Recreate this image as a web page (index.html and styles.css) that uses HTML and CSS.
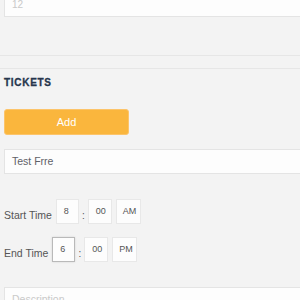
FILE: index.html
```html
<!DOCTYPE html>
<html lang="en">
<head>
    <meta charset="UTF-8">
    <title>Tickets</title>
    <link rel="stylesheet" href="styles.css">
</head>
<body>
    <div class="page">
        <div class="field field-top">12</div>

        <div class="divider"></div>

        <h2 class="section-title">TICKETS</h2>

        <button class="btn-add">Add</button>

        <div class="field field-name">Test Frre</div>

        <div class="time-row time-start">
            <span class="time-label">Start Time</span>
            <span class="time-box hour">8</span>
            <span class="time-sep">:</span>
            <span class="time-box minute">00</span>
            <span class="time-box ampm">AM</span>
        </div>

        <div class="time-row time-end">
            <span class="time-label">End Time</span>
            <span class="time-box hour focused">6</span>
            <span class="time-sep">:</span>
            <span class="time-box minute">00</span>
            <span class="time-box ampm">PM</span>
        </div>

        <div class="field field-desc">Description</div>
    </div>
</body>
</html>
```

FILE: styles.css
```css
:root {
    --background: #f3f3f3;
    --field: #fdfdfd;
    --border: #e4e4e4;
    --text: #555;
    --muted: #c9c9c9;
    --heading: #26364d;
    --accent: #fab63d;
}

* {
    margin: 0;
    padding: 0;
    box-sizing: border-box;
}

body {
    background: var(--background);
    color: var(--text);
    font-family: "Liberation Sans", Arial, sans-serif;
    overflow: hidden;
}

.page {
    width: 340px;
    padding-left: 4px;
}

.field {
    background: var(--field);
    border: 1px solid var(--border);
    font-size: 10.5px;
    padding-left: 7px;
}

.field-top {
    height: 17px;
    border-top: none;
    color: var(--muted);
    font-size: 10px;
    line-height: 10px;
}

.divider {
    margin-top: 38px;
    margin-left: -4px;
    height: 14px;
    border-top: 1px solid #e6e6e6;
    border-bottom: 1px solid #e6e6e6;
}

.section-title {
    margin-top: 8px;
    font-size: 10px;
    line-height: 11px;
    font-weight: 700;
    letter-spacing: 0.7px;
    color: var(--heading);
    -webkit-text-stroke: 0.3px var(--heading);
}

.btn-add {
    display: block;
    margin-top: 21px;
    width: 125px;
    height: 26px;
    border: 1px solid #fcc46a;
    border-radius: 3px;
    background: var(--accent);
    color: #fff;
    font-family: inherit;
    font-size: 11px;
}

.field-name {
    margin-top: 14px;
    height: 25px;
    line-height: 23px;
    color: #5f6168;
}

.time-row {
    display: flex;
    align-items: flex-end;
    height: 25px;
}

.time-start {
    margin-top: 25px;
}

.time-end {
    margin-top: 13px;
}

.time-label {
    font-size: 10.5px;
    line-height: 11px;
    padding-bottom: 3px;
    margin-right: 4px;
}

.time-box {
    height: 25px;
    line-height: 23px;
    background: var(--field);
    border: 1px solid #e8e8e8;
    font-size: 9px;
    padding-left: 7px;
}

.time-box.hour {
    width: 23px;
}

.time-box.minute {
    width: 24px;
}

.time-box.ampm {
    width: 25px;
    margin-left: 4px;
    padding-left: 6px;
}

.time-box.focused {
    border-color: #b9b9b9;
    box-shadow: 0 0 2px rgba(0, 0, 0, 0.12);
}

.time-sep {
    width: 9px;
    text-align: center;
    font-size: 10px;
    line-height: 11px;
    padding-bottom: 3px;
}

.field-desc {
    margin-top: 25px;
    height: 30px;
    line-height: 22px;
    color: var(--muted);
}
```
